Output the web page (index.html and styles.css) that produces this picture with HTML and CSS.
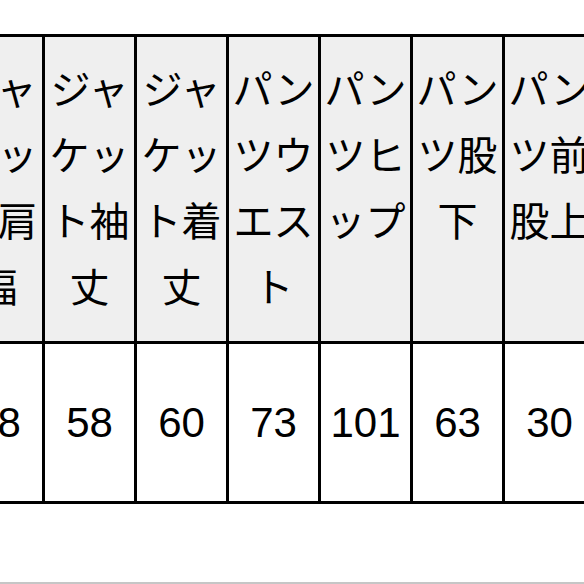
FILE: index.html
```html
<!DOCTYPE html>
<html lang="ja">
<head>
<meta charset="utf-8">
<link rel="stylesheet" href="styles.css">
</head>
<body>
<div class="frame">
  <table class="sizes">
    <colgroup>
      <col class="c"><col class="c"><col class="c"><col class="c"><col class="c"><col class="c"><col class="c">
    </colgroup>
    <thead>
      <tr>
        <th>ジャケット肩幅</th>
        <th>ジャケット袖丈</th>
        <th>ジャケット着丈</th>
        <th>パンツウエスト</th>
        <th>パンツヒップ</th>
        <th>パンツ股下</th>
        <th>パンツ前股上</th>
      </tr>
    </thead>
    <tbody>
      <tr>
        <td>48</td>
        <td>58</td>
        <td>60</td>
        <td>73</td>
        <td>101</td>
        <td>63</td>
        <td>30</td>
      </tr>
    </tbody>
  </table>
</div>
</body>
</html>
```
FILE: styles.css
```css
html, body {
  margin: 0;
  padding: 0;
  background: #ffffff;
  overflow: hidden;
}

.frame {
  width: 584px;
  height: 584px;
  box-sizing: border-box;
  padding-top: 34px;
  border-bottom: 2px solid #c6c6c6;
  overflow: hidden;
}

.sizes {
  border-collapse: collapse;
  table-layout: fixed;
  width: 644px;
  margin-left: -50px;
  border: 3px solid #000;
  font-family: "Liberation Sans", "Noto Sans CJK JP", sans-serif;
  color: #000;
}

.sizes .c {
  width: 92px;
}

.sizes th,
.sizes td {
  border: 3px solid #000;
  text-align: center;
  padding: 0;
}

.sizes th {
  background: #efefef;
  font-weight: normal;
  font-size: 40px;
  line-height: 66px;
  height: 264px;
  padding: 20px 0;
  vertical-align: top;
  line-break: anywhere;
  word-break: break-all;
}

.sizes td {
  background: #ffffff;
  font-size: 42px;
  line-height: 57px;
  height: 57px;
  padding: 50px 0;
  vertical-align: middle;
}
```
